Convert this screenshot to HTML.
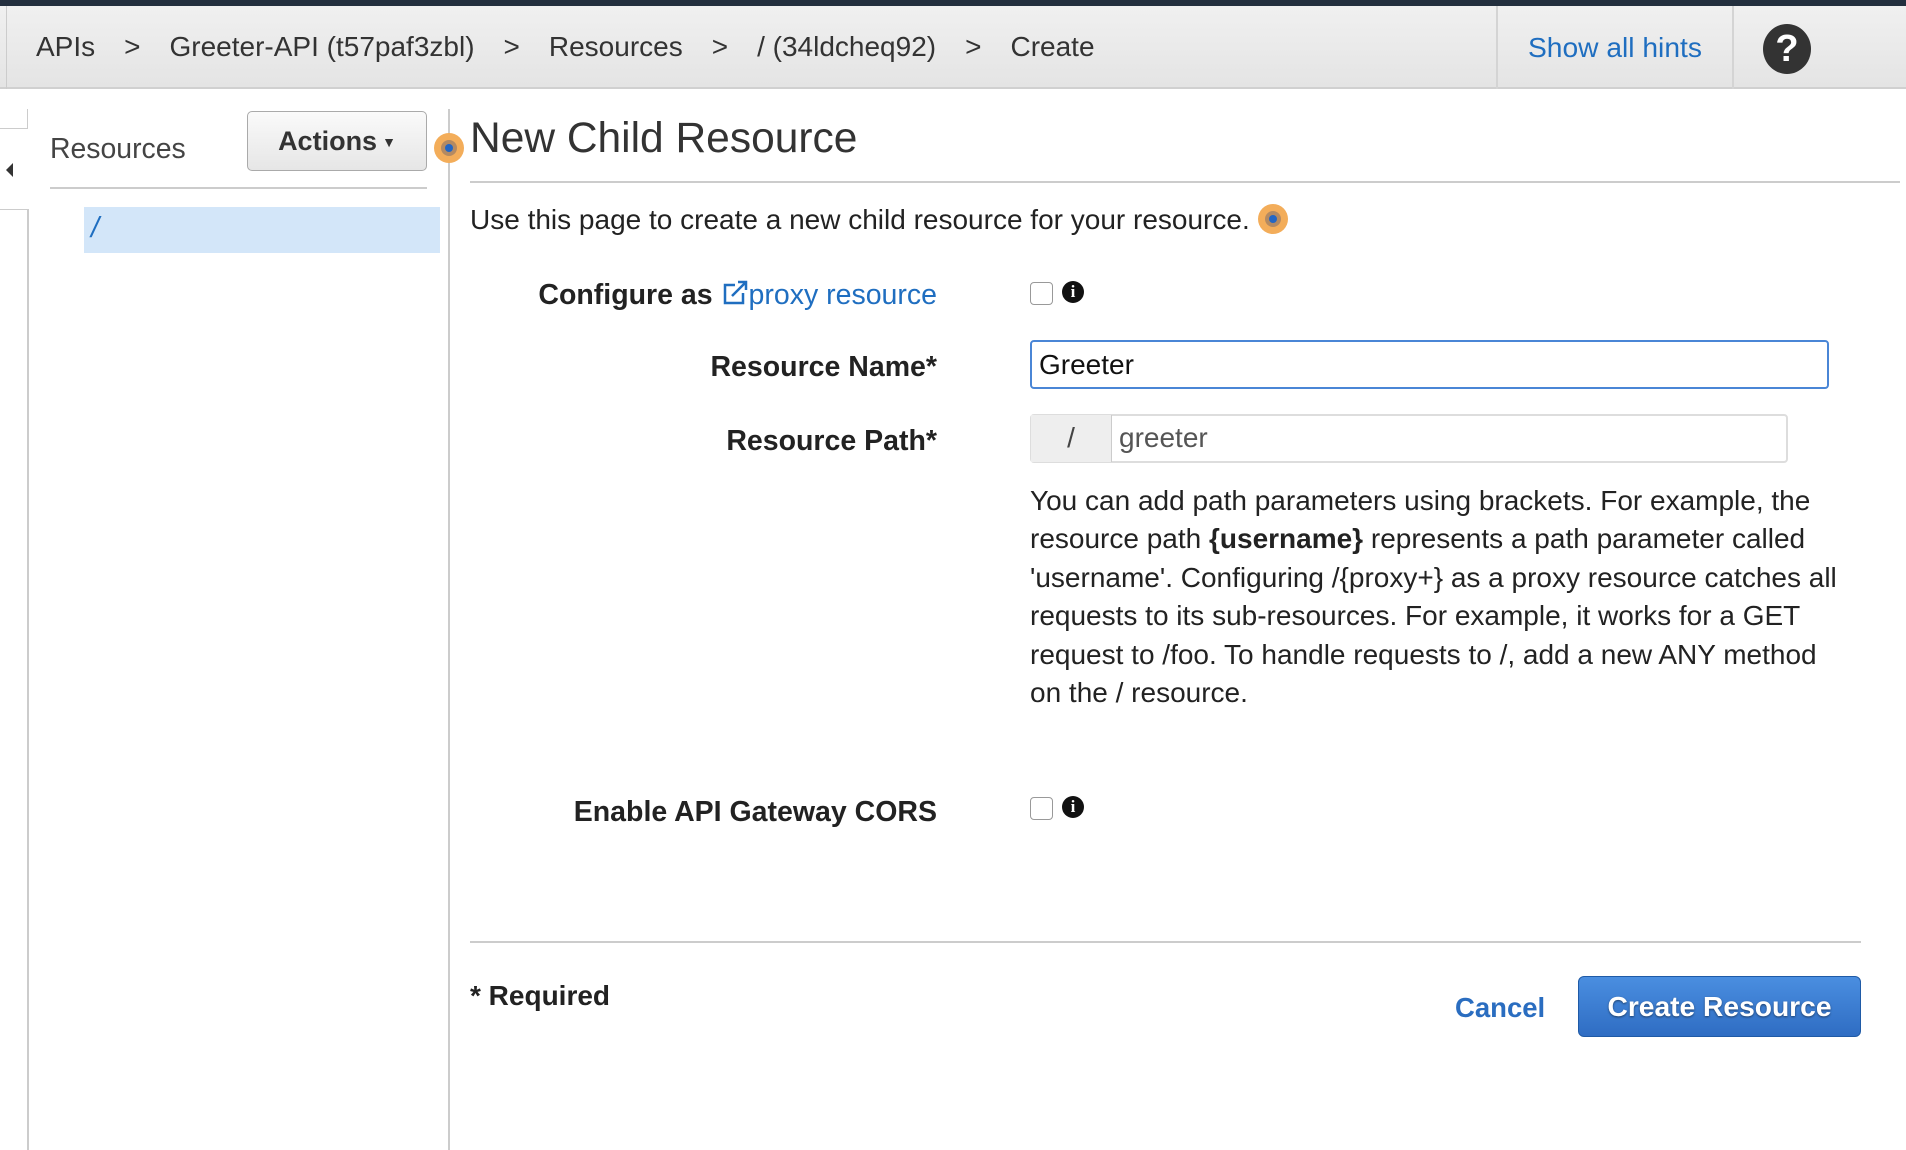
<!DOCTYPE html>
<html><head><meta charset="utf-8"><style>
*{margin:0;padding:0;box-sizing:border-box}
body{width:1906px;height:1150px;background:#fff;font-family:"Liberation Sans",Arial,sans-serif;position:relative;overflow:hidden;color:#222}
.a{position:absolute;white-space:nowrap}
.lbl{position:absolute;right:969px;font-weight:bold;font-size:28.5px;color:#222;white-space:nowrap}
.dot{position:absolute;width:30px;height:30px;border-radius:50%;background:#f3ad5a;}
.dot:after{content:"";position:absolute;left:7px;top:7px;width:16px;height:16px;border-radius:50%;background:#b48a62}
.dot:before{content:"";position:absolute;left:11px;top:11px;width:8px;height:8px;border-radius:50%;background:#2366c4;z-index:2}
.cb{position:absolute;width:23px;height:23px;border:1px solid #999;border-radius:4px;background:#fff}
.info{position:absolute;width:22px;height:22px;border-radius:50%;background:#111;color:#fff;font:bold 17px "Liberation Serif",serif;text-align:center;line-height:22px}
</style></head><body>
<div class="a" style="left:0;top:0;width:1906px;height:6px;background:#232f3e"></div>
<div class="a" style="left:0;top:6px;width:1906px;height:83px;background:linear-gradient(#f0f0f0,#e4e4e4);border-bottom:2px solid #d0d0d0"></div>
<div class="a" style="left:6px;top:6px;width:1px;height:83px;background:#ccc"></div>
<div class="a" style="left:36px;top:31px;font-size:28px;color:#333">APIs<span style="margin:0 29px">&gt;</span>Greeter-API (t57paf3zbl)<span style="margin:0 29px">&gt;</span>Resources<span style="margin:0 29px">&gt;</span>/ (34ldcheq92)<span style="margin:0 29px">&gt;</span>Create</div>
<div class="a" style="left:1496px;top:6px;width:2px;height:83px;background:#d4d4d4"></div>
<div class="a" style="left:1732px;top:6px;width:2px;height:83px;background:#d4d4d4"></div>
<div class="a" style="left:1528px;top:31px;font-size:28.2px;color:#1f6ec0">Show all hints</div>
<div class="a" style="left:1763px;top:24px;width:48px;height:50px;border-radius:50%;background:#333;color:#fff;font:bold 38px 'Liberation Sans';text-align:center;line-height:50px">?</div>

<div class="a" style="left:0;top:109px;width:28px;height:20px;border:1px solid #ccc;border-left:none;border-top:none"></div>
<div class="a" style="left:6px;top:163px;width:0;height:0;border-top:7px solid transparent;border-bottom:7px solid transparent;border-right:7px solid #333"></div>
<div class="a" style="left:0;top:209px;width:29px;height:941px;border-top:1px solid #ccc;border-right:2px solid #ccc"></div>
<div class="a" style="left:50px;top:133px;font-size:28.4px;color:#444">Resources</div>
<div class="a" style="left:247px;top:111px;width:180px;height:60px;border:1px solid #aaa;border-radius:5px;background:linear-gradient(#fafafa,#e6e6e6);font-weight:bold;font-size:27px;color:#333;text-align:center;line-height:58px">Actions<span style="font-size:14px;margin-left:5px;vertical-align:3px">▼</span></div>
<div class="a" style="left:50px;top:187px;width:377px;height:2px;background:#ccc"></div>
<div class="a" style="left:84px;top:207px;width:356px;height:46px;background:#d3e6f9"></div>
<div class="a" style="left:91px;top:212px;font-size:29px;font-style:italic;color:#1f6ec0">/</div>
<div class="a" style="left:448px;top:109px;width:2px;height:1041px;background:#ccc"></div>
<div class="dot" style="left:434px;top:133px"></div>

<div class="a" style="left:470px;top:115px;font-size:42.5px;color:#333">New Child Resource</div>
<div class="a" style="left:470px;top:181px;width:1430px;height:2px;background:#ccc"></div>
<div class="a" style="left:470px;top:204px;font-size:28px;color:#222">Use this page to create a new child resource for your resource.</div>
<div class="dot" style="left:1258px;top:204px"></div>

<div class="lbl" style="top:279px">Configure as <span style="color:#1f6ec0;font-weight:normal"><svg width="28" height="26" viewBox="0 0 28 26" style="vertical-align:-2px"><path d="M14 5H4v18h18V13" fill="none" stroke="#1f6ec0" stroke-width="2.5"/><path d="M11 16L25 2M17 2h8v8" fill="none" stroke="#1f6ec0" stroke-width="2.5"/></svg>proxy resource</span></div>
<div class="cb" style="left:1030px;top:282px"></div>
<div class="info" style="left:1062px;top:281px">i</div>
<div class="lbl" style="top:351px">Resource Name*</div>
<div class="a" style="left:1030px;top:340px;width:799px;height:49px;border:2px solid #4a86d6;border-radius:4px;font-size:28px;padding:7px 7px;color:#111">Greeter</div>
<div class="lbl" style="top:425px">Resource Path*</div>
<div class="a" style="left:1030px;top:414px;width:758px;height:49px;border:2px solid #ddd;border-radius:4px"></div>
<div class="a" style="left:1031px;top:415px;width:81px;height:47px;background:#eee;border-right:1px solid #ccc;font-size:28px;text-align:center;line-height:46px;color:#444">/</div>
<div class="a" style="left:1119px;top:422px;font-size:28px;color:#555">greeter</div>
<div class="a" style="left:1030px;top:482px;font-size:28px;line-height:38.4px;color:#222;white-space:normal;width:811px">You can add path parameters using brackets. For example, the resource path <b>{username}</b> represents a path parameter called 'username'. Configuring /{proxy+} as a proxy resource catches all requests to its sub-resources. For example, it works for a GET request to /foo. To handle requests to /, add a new ANY method on the / resource.</div>

<div class="lbl" style="top:796px">Enable API Gateway CORS</div>
<div class="cb" style="left:1030px;top:797px"></div>
<div class="info" style="left:1062px;top:796px">i</div>

<div class="a" style="left:470px;top:941px;width:1391px;height:2px;background:#ccc"></div>
<div class="a" style="left:470px;top:980px;font-size:28px;font-weight:bold;color:#222">* Required</div>
<div class="a" style="left:1455px;top:992px;font-size:27.5px;font-weight:bold;color:#2a6dc0">Cancel</div>
<div class="a" style="left:1578px;top:976px;width:283px;height:61px;border:1px solid #1f5aa6;border-radius:6px;background:linear-gradient(#4a8ee0,#2f6dc3);color:#fff;font-weight:bold;font-size:28.2px;text-align:center;line-height:59px;text-shadow:0 1px 2px rgba(0,0,0,.5)">Create Resource</div>
</body></html>
